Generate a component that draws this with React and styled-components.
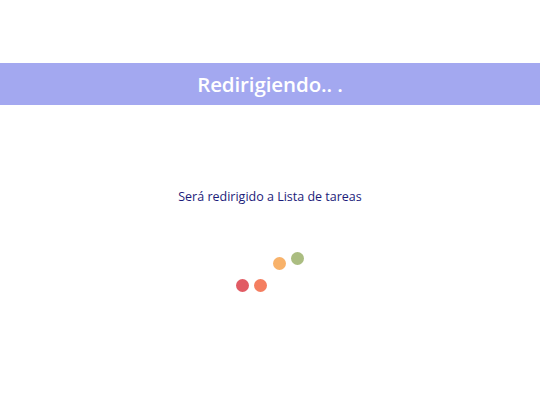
import styled, { createGlobalStyle } from "styled-components";

const GlobalStyle = createGlobalStyle`
  html, body {
    margin: 0;
    padding: 0;
    background: #ffffff;
    font-family: "Open Sans", "Noto Sans", sans-serif;
  }
`;

const Page = styled.div`
  width: 540px;
  height: 405px;
  padding-top: 63px;
  box-sizing: border-box;
  display: flex;
  flex-direction: column;
  align-items: center;
`;

const Banner = styled.div`
  width: 100%;
  height: 42px;
  background-color: #a3a8f0;
  display: flex;
  align-items: center;
  justify-content: center;
`;

const Title = styled.h1`
  margin: 0;
  color: #ffffff;
  font-size: 20.5px;
  font-weight: 600;
  letter-spacing: -0.1px;
`;

const Message = styled.p`
  margin: 83px 0 0;
  color: #1c1c7a;
  font-size: 12.5px;
  line-height: 18px;
`;

const Loader = styled.div`
  margin-top: 46px;
  height: 40px;
  display: flex;
  align-items: flex-end;
  gap: 5.5px;
`;

const Dot = styled.span`
  width: 13px;
  height: 13px;
  border-radius: 50%;
  background-color: ${(props) => props.color};
  transform: translateY(${(props) => -props.lift}px);
`;

const dots = [
  { color: "#e15b64", lift: 0 },
  { color: "#f47e60", lift: 0 },
  { color: "#f8b26a", lift: 22 },
  { color: "#abbd81", lift: 27 },
];

const App = () => {
  return (
    <>
      <GlobalStyle />
      <Page>
        <Banner>
          <Title>Redirigiendo.. .</Title>
        </Banner>
        <Message>Será redirigido a Lista de tareas</Message>
        <Loader>
          {dots.map((dot) => (
            <Dot key={dot.color} color={dot.color} lift={dot.lift} />
          ))}
        </Loader>
      </Page>
    </>
  );
};

export default App;
